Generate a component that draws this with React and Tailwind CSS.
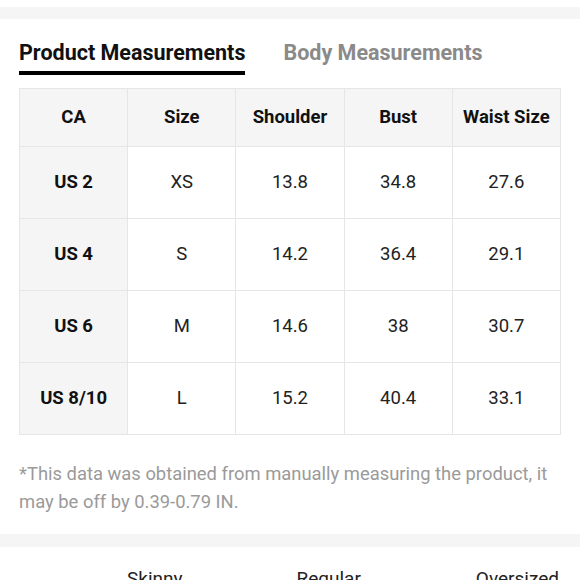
const COLUMNS = ['CA', 'Size', 'Shoulder', 'Bust', 'Waist Size'];

const ROWS = [
  ['US 2', 'XS', '13.8', '34.8', '27.6'],
  ['US 4', 'S', '14.2', '36.4', '29.1'],
  ['US 6', 'M', '14.6', '38', '30.7'],
  ['US 8/10', 'L', '15.2', '40.4', '33.1'],
];

export default function App() {
  return (
    <div className="w-[580px] h-[580px] overflow-hidden bg-white text-[#222]" style={{ fontFamily: 'Roboto, "Noto Sans", sans-serif' }}>
      <div className="h-[7px]" />
      <div className="h-[12px] bg-[#f5f5f5]" />

      {/* Tabs */}
      <div className="flex gap-[38px] px-[19px] pt-[21px]">
        <div className="flex flex-col">
          <span className="text-[21.5px] leading-[26px] font-bold text-[#111]">Product Measurements</span>
          <div className="mt-[5px] h-[4px] bg-black" />
        </div>
        <span className="text-[21.5px] leading-[26px] font-bold text-[#8a8a8a]">Body Measurements</span>
      </div>

      {/* Table */}
      <div className="px-[19px] mt-[13px]">
        <table className="table-fixed w-[542px] border-collapse">
          <thead>
            <tr className="h-[58px] bg-[#f5f5f5]">
              {COLUMNS.map(h => (
                <th key={h} className="border border-[#e6e6e6] text-[18.5px] font-bold text-[#111] text-center">{h}</th>
              ))}
            </tr>
          </thead>
          <tbody>
            {ROWS.map(row => (
              <tr key={row[0]} className="h-[72px]">
                {row.map((cell, i) => (
                  <td key={i} className={`border border-[#e6e6e6] text-[18.5px] text-center ${i === 0 ? 'bg-[#f5f5f5] font-bold text-[#111]' : 'text-[#222]'}`}>
                    {cell}
                  </td>
                ))}
              </tr>
            ))}
          </tbody>
        </table>
      </div>

      {/* Note */}
      <p className="px-[19px] mt-[25px] text-[18.4px] leading-[28px] text-[#9a9a9a]">
        *This data was obtained from manually measuring the product, it may be off by 0.39-0.79 IN.
      </p>

      <div className="mt-[18px] h-[13px] bg-[#f5f5f5]" />

      {/* Fit labels */}
      <div className="flex mt-[20px] text-[19px] leading-[24px] text-[#222]">
        <span className="ml-[127px]">Skinny</span>
        <span className="ml-[114px]">Regular</span>
        <span className="ml-[115px]">Oversized</span>
      </div>
    </div>
  );
}
